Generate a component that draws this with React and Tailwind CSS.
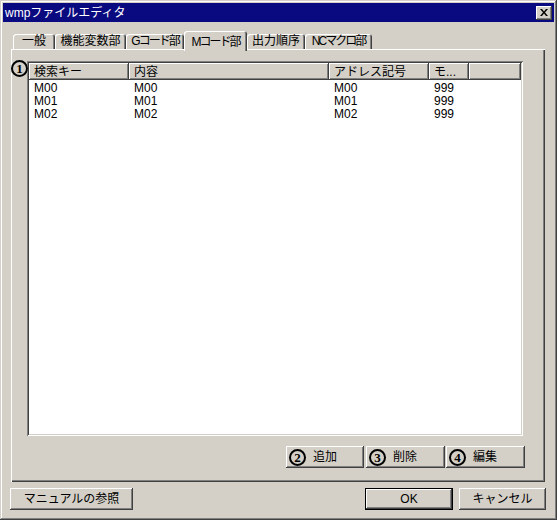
import React from "react";

const raised =
  "shadow-[inset_-1px_-1px_#404040,inset_1px_1px_#ffffff,inset_-2px_-2px_#808080,inset_2px_2px_#d4d0c8]";

const Circled = ({ n }) => (
  <span className="inline-flex w-[17px] h-[17px] shrink-0 items-center justify-center rounded-full border-2 border-black text-[13px] leading-none font-bold text-black [font-family:'Liberation_Serif',serif]">
    {n}
  </span>
);

const Button = ({ width, children, isDefault, className = "" }) => (
  <div
    className={`h-[22px] ${width} bg-[#d4d0c8] ${
      isDefault ? "border border-black" : ""
    } ${className}`}
  >
    <div className={`w-full h-full flex items-center ${raised}`}>{children}</div>
  </div>
);

const tabs = [
  { label: "一般", w: "w-[42px]", t: "" },
  { label: "機能変数部", w: "w-[71px]", t: "" },
  { label: "Gコード部", w: "w-[58px]", t: "tracking-[-2px]" },
  { label: "Mコード部", w: "w-[63px]", t: "tracking-[-2px]", active: true },
  { label: "出力順序", w: "w-[58px]", t: "" },
  { label: "NCマクロ部", w: "w-[67px]", t: "tracking-[-2px]" },
];

const columns = [
  { label: "検索キー", w: "w-[100px]" },
  { label: "内容", w: "w-[200px]" },
  { label: "アドレス記号", w: "w-[100px]" },
  { label: "モ...", w: "w-[40px]" },
];

const rows = [
  ["M00", "M00", "M00", "999"],
  ["M01", "M01", "M01", "999"],
  ["M02", "M02", "M02", "999"],
];

export default function App() {
  return (
    <div className="w-[557px] h-[520px] bg-[#d4d0c8] p-[3px] text-[12px] text-black [font-family:'Liberation_Sans','Noto_Sans_CJK_JP',sans-serif] shadow-[inset_-1px_-1px_#404040,inset_1px_1px_#d4d0c8,inset_-2px_-2px_#808080,inset_2px_2px_#ffffff]">
      {/* title bar */}
      <div className="h-[19px] bg-[#0a0a80] flex items-center justify-between pl-[2px] pr-[2px]">
        <span className="text-white leading-none">wmpファイルエディタ</span>
        <div className={`w-[16px] h-[14px] bg-[#d4d0c8] flex items-center justify-center ${raised}`}>
          <svg width="8" height="7" viewBox="0 0 8 7">
            <path d="M0 0h2l2 2.5L6 0h2L5 3.5 8 7H6L4 4.5 2 7H0l3-3.5z" fill="#000" />
          </svg>
        </div>
      </div>

      {/* tabs */}
      <div className="mt-[9px] ml-[8px] flex items-end h-[18px] pl-[2px]">
        {tabs.map((t) =>
          t.active ? (
            <div
              key={t.label}
              className={`${t.w} h-[20px] -mb-[2px] relative z-10 bg-[#d4d0c8] rounded-t-[3px] flex justify-center pt-[2px] shadow-[inset_1px_1px_#ffffff,inset_-1px_0_#404040,inset_-2px_0_#808080]`}
            >
              <span className={t.t}>{t.label}</span>
            </div>
          ) : (
            <div
              key={t.label}
              className={`${t.w} h-[15px] bg-[#d4d0c8] rounded-t-[3px] flex justify-center pt-[1px] leading-[13px] shadow-[inset_1px_1px_#ffffff,inset_-1px_0_#404040,inset_-2px_0_#808080]`}
            >
              <span className={t.t}>{t.label}</span>
            </div>
          )
        )}
      </div>

      {/* panel */}
      <div className="ml-[8px] w-[534px] h-[433px] relative pt-[12px] pl-[16px] pr-[22px] shadow-[inset_1px_1px_#ffffff,inset_-1px_-1px_#404040,inset_-2px_-2px_#808080]">
        <div className="absolute left-[0px] top-[11px] z-10 bg-[#d4d0c8] rounded-full">
          <Circled n="1" />
        </div>

        {/* list view */}
        <div className="h-[375px] bg-white p-[2px] flex flex-col shadow-[inset_1px_1px_#808080,inset_-1px_-1px_#ffffff,inset_2px_2px_#404040,inset_-2px_-2px_#d4d0c8]">
          <div className="h-[17px] flex shrink-0">
            {columns.map((c) => (
              <div
                key={c.label}
                className={`${c.w} h-full bg-[#d4d0c8] pl-[5px] flex items-center leading-none ${raised}`}
              >
                {c.label}
              </div>
            ))}
            <div className={`flex-1 h-full bg-[#d4d0c8] ${raised}`} />
          </div>
          <div className="pt-[2px]">
            {rows.map((r, i) => (
              <div key={i} className="flex h-[13px] leading-[13px]">
                {r.map((v, j) => (
                  <div key={j} className={`${columns[j].w} pl-[5px]`}>
                    {v}
                  </div>
                ))}
              </div>
            ))}
          </div>
        </div>

        {/* action buttons */}
        <div className="mt-[10px] flex justify-end -mr-[2px]">
          <Button width="w-[78px]" className="mr-[2px]">
            <div className="pl-[3px] flex items-center gap-[7px]">
              <Circled n="2" />
              <span>追加</span>
            </div>
          </Button>
          <Button width="w-[79px]" className="mr-[1px]">
            <div className="pl-[3px] flex items-center gap-[7px]">
              <Circled n="3" />
              <span>削除</span>
            </div>
          </Button>
          <Button width="w-[79px]">
            <div className="pl-[3px] flex items-center gap-[7px]">
              <Circled n="4" />
              <span>編集</span>
            </div>
          </Button>
        </div>
      </div>

      {/* bottom buttons */}
      <div className="mt-[6px] flex pl-[7px]">
        <Button width="w-[123px]">
          <span className="w-full text-center">マニュアルの参照</span>
        </Button>
        <div className="flex-1" />
        <Button width="w-[88px]" isDefault className="mr-[6px]">
          <span className="w-full text-center">OK</span>
        </Button>
        <Button width="w-[87px]" className="mr-[8px]">
          <span className="w-full text-center">キャンセル</span>
        </Button>
      </div>
    </div>
  );
}
